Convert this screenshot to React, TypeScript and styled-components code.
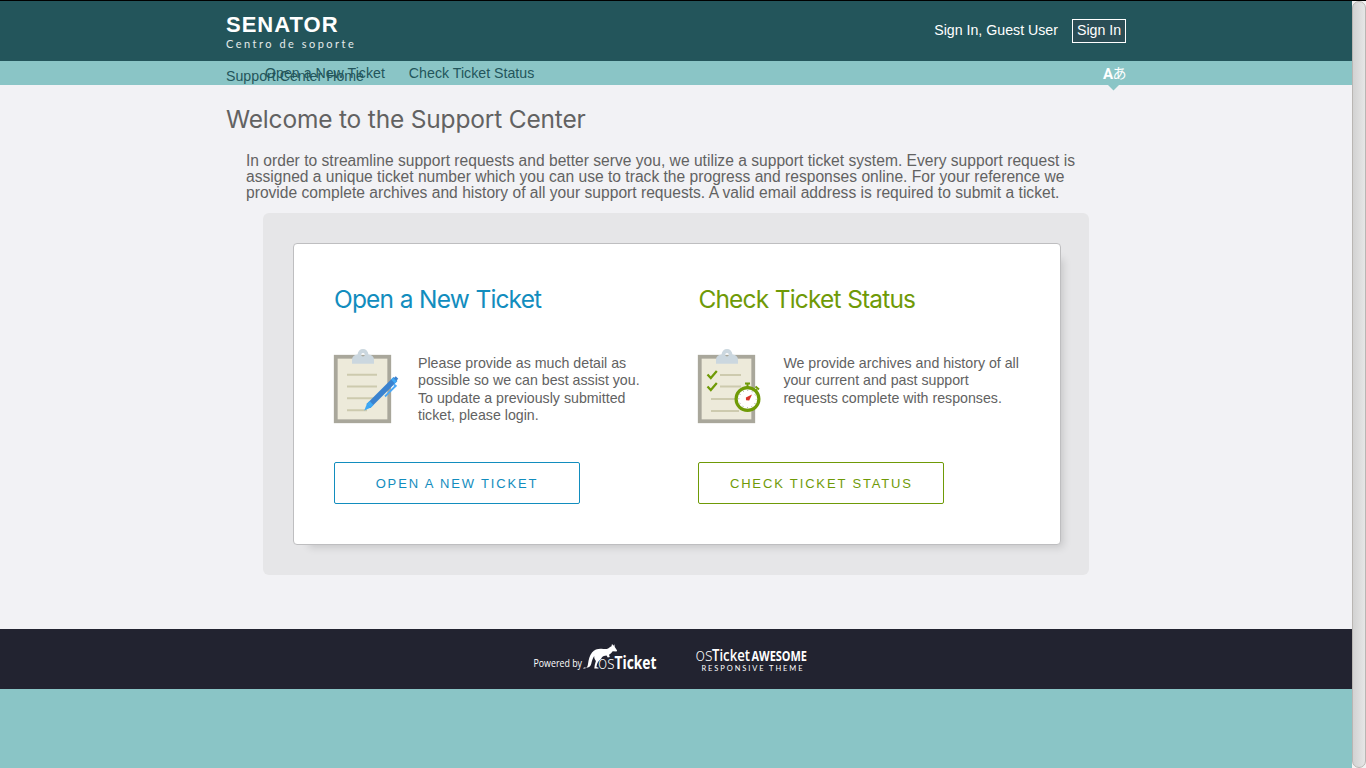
import React from "react";
import styled, { createGlobalStyle } from "styled-components";

const BLUE = "#128dbe";
const GREEN = "#6f9a07";

const GlobalStyle = createGlobalStyle`
  * { box-sizing: border-box; }
  body {
    margin: 0;
    overflow: hidden;
    background: #8ac5c6;
    font-family: "Liberation Sans", Arial, sans-serif;
    font-size: 14.2px;
    color: #626262;
  }
  a { color: inherit; text-decoration: none; }
  h1, h2, p { margin: 0; font-weight: 400; }
  svg { overflow: visible; }
`;

const Window = styled.div`
  display: flex;
  height: 768px;
  border-top: 1px solid #000;
`;

const Page = styled.div`
  flex: 1;
  display: flex;
  flex-direction: column;
`;

const Container = styled.div`
  width: 900px;
  margin: 0 auto;
`;

const Header = styled.header`
  height: 60px;
  background: #23555b;
  color: #fff;
`;

const HeaderInner = styled(Container)`
  display: flex;
  justify-content: space-between;
`;

const Brand = styled.a`
  display: block;
  padding-top: 11px;
`;

const BrandName = styled.div`
  font-size: 22px;
  line-height: 25px;
  font-weight: 700;
  letter-spacing: 1px;
`;

const BrandTag = styled.div`
  font-family: Lato, sans-serif;
  font-size: 11px;
  line-height: 14px;
  letter-spacing: 2.5px;
  color: #e3ebeb;
`;

const Account = styled.div`
  display: flex;
  align-items: center;
  height: 24px;
  margin-top: 18px;
  gap: 14px;
`;

const SignIn = styled.a`
  width: 54px;
  height: 24px;
  padding: 0 4px;
  border: 1px solid #fff;
  background: #2b4d55;
  line-height: 21px;
  white-space: nowrap;
`;

const Greeting = styled.span`
  line-height: 22px;
  padding-bottom: 2px;
`;

const Nav = styled.nav`
  height: 24px;
  background: #8ac5c6;
  color: #23555b;
`;

const NavInner = styled(Container)`
  position: relative;
  display: flex;
  gap: 24px;
  padding-left: 39px;
  line-height: 24px;
`;

const NavHome = styled.a`
  position: absolute;
  left: 0;
  top: 3px;
`;

const Language = styled.a`
  position: relative;
  display: flex;
  margin-left: auto;
  color: #fff;
`;

const Content = styled.main`
  height: 544px;
  background: #f2f2f5;
`;

const Title = styled.h1`
  padding-top: 17px;
  font-family: Inter, sans-serif;
  font-size: 24.5px;
  line-height: 34px;
  letter-spacing: -0.18px;
`;

const Intro = styled.p`
  padding: 17px 20px 0;
  font-size: 15.6px;
  line-height: 16px;
  letter-spacing: 0.01px;
`;

const Panel = styled.section`
  width: 826px;
  height: 362px;
  margin: 12px 0 0 37px;
  padding: 30px 28px 30px 30px;
  border-radius: 6px;
  background: #e6e6e8;
`;

const Card = styled.div`
  display: flex;
  height: 302px;
  padding: 38px 0 0 40px;
  border: 1px solid #bebec0;
  border-radius: 4px;
  background: #fff;
  box-shadow: 9px 9px 8px -7px rgba(0, 0, 0, 0.15);
`;

const Option = styled.article<{ $tone: string }>`
  flex: none;
  width: 364.4px;
  color: ${(p) => p.$tone};
`;

const OptionTitle = styled.h2`
  font-family: Inter, sans-serif;
  font-size: 24.5px;
  line-height: 34px;
  letter-spacing: -0.85px;
  word-spacing: 0.5px;
`;

const OptionBody = styled.div`
  display: flex;
  height: 80px;
  margin-top: 33px;
  gap: 14px;
  color: #626262;
  svg { flex: none; }
`;

const Description = styled.p`
  width: 240px;
  padding-top: 6px;
  line-height: 17.4px;
`;

const Button = styled.a`
  display: block;
  width: 246px;
  height: 42px;
  margin-top: 33px;
  border: 1px solid currentColor;
  border-radius: 2px;
  font-size: 13px;
  line-height: 41px;
  letter-spacing: 1.85px;
  text-align: center;
  text-transform: uppercase;
`;

const Footer = styled.footer`
  display: flex;
  height: 60px;
  padding: 12px 0 0 530px;
  gap: 32px;
  background: #222330;
`;

const Scrollbar = styled.div`
  width: 14px;
  background: #f3f3f3;
`;

const Thumb = styled.div`
  height: 767px;
  border: 1px solid #b9b6b3;
  border-radius: 7px;
  background: linear-gradient(90deg, #d2d2d2, #e6e6e6);
`;

const Clipboard = () => (
  <>
    <rect x="1.75" y="7.75" width="53.5" height="64.5" fill="#edeada" stroke="#a9a79b" strokeWidth="3.8" />
    <path
      fillRule="evenodd"
      fill="#cbd7df"
      d="M18 14.8V11Q18 6 23.5 5.5C24 2 26 0 29 0s5 2 5.5 5.500Q40 6 40 11v3.800ZM29 4a1.800 1.800 0 1 0 0 3.600 1.800 1.800 0 1 0 0-3.600Z"
    />
  </>
);

const OpenIcon = () => (
  <svg width="70" height="76" viewBox="0 0 70 76">
    <Clipboard />
    <path d="M13 25.700h30M13 37.500h30M13 49.300h30M13 61.200h20" stroke="#cdcaae" strokeWidth="2" />
    <path d="M30.300 61.500 33 54.500 37 58.500Z" fill="#3fa9f5" />
    <path d="M34.500 57 61.500 30" stroke="#3b82cf" strokeWidth="5.400" />
    <path d="M34.500 57l3-3M59 32.500l2-2" stroke="#3fa9f5" strokeWidth="5.400" />
    <path d="M61 30.500 63 28.500" stroke="#3b82cf" strokeWidth="3.500" />
    <path d="M51 47.500 62 36.500M60 35.500l2.500 2" stroke="#4ba8f6" strokeWidth="1.800" />
  </svg>
);

const StatusIcon = () => (
  <svg width="71" height="76" viewBox="0 0 71 76">
    <Clipboard />
    <path d="M22 26h21M22 37.500h21M13 50h25M13 62h28" stroke="#cdcaae" strokeWidth="2" />
    <path d="m9.500 25.500 3.300 3.500 6-7M9.500 37.500l3.300 3.500 6-7" fill="none" stroke={GREEN} strokeWidth="2.200" />
    <path d="M47 34.500h5M49.500 35v4M57.500 37.500l3.500 3M59 40.500l-2 2" stroke={GREEN} strokeWidth="2" />
    <circle cx="49.500" cy="50" r="11.400" fill="#fff" stroke={GREEN} strokeWidth="3.200" />
    <circle cx="49.500" cy="50" r="8.700" fill="none" stroke="#777" strokeDasharray="0.8 3.755" strokeDashoffset="0.4" />
    <path d="M54 45.500 51.200 51.500 48 51.200 47.900 48.500Z" fill="#d8342b" />
  </svg>
);

const PoweredBy = () => (
  <svg width="130" height="36" viewBox="0 0 130 36" fill="#fff">
    <text x="3.500" y="25.500" fontFamily="Open Sans, sans-serif" fontSize="10" textLength="48.500" lengthAdjust="spacingAndGlyphs">Powered by</text>
    <path d="M53 27.600c3.500 .2 4.500-1.600 5-4.600C58.700 18.500 59.500 14.500 62 11.500 64.500 8.500 68 7.600 71.500 7.800c3 .2 5 .6 7-.6 1.200-.8 2-1.600 3-2L82 2.700l1.300 2L84.300 3.300l.5 2.700 2.300 3.500-.6 1-3.800-.2c-1 1.600-2.200 2.700-3.700 3.500l.8 2.300-2 .4-1.300-2c-2 .2-3.500 .7-4.500 1.800-1 2.200-3 3.200-4 4.700-1 1.800-1.200 3.500-1.500 5l2 .7v.8h-4.200c.2-2.500 .6-5 1.600-7.500-1.200-1.500-1.800-3-1.700-5-1.700 2.700-2.400 5.200-3 8-.7 2.700-2.700 4.200-7.200 3.600Z" />
    <text x="68" y="28.300" fontFamily="Open Sans, sans-serif" fontSize="19" fontWeight="300" textLength="16.500" lengthAdjust="spacingAndGlyphs">os</text>
    <text x="84.500" y="28.300" fontFamily="Open Sans, sans-serif" fontSize="18.500" fontWeight="700" textLength="42" lengthAdjust="spacingAndGlyphs">Ticket</text>
  </svg>
);

const ThemeCredit = () => (
  <svg width="120" height="36" viewBox="0 0 120 36" fill="#fff" fontFamily="Open Sans, sans-serif">
    <text x="3.500" y="19.500" fontSize="17.500" fontWeight="300" textLength="17" lengthAdjust="spacingAndGlyphs">os</text>
    <text x="20" y="19.500" fontSize="16.500" fontWeight="600" textLength="38" lengthAdjust="spacingAndGlyphs">Ticket</text>
    <text x="59.500" y="19.500" fontSize="13.700" fontWeight="700" textLength="55.500" lengthAdjust="spacingAndGlyphs">AWESOME</text>
    <text x="9.500" y="29.700" fontFamily="Lato, sans-serif" fontSize="7.500" textLength="101">RESPONSIVE THEME</text>
  </svg>
);

const LanguageIcon = () => (
  <svg width="24" height="24" viewBox="0 0 24 24" fill="#fff">
    <text x="1" y="18" fontFamily="Roboto, sans-serif" fontSize="15" fontWeight="700">A</text>
    <text x="10.500" y="17.300" fontFamily="Noto Sans CJK JP, sans-serif" fontSize="14" fontWeight="400">あ</text>
    <path d="M6 24h11l-5.500 5.500Z" fill="#8ac5c6" />
  </svg>
);

export default function App() {
  return (
    <>
      <GlobalStyle />
      <Window>
        <Page>
          <Header>
            <HeaderInner>
              <Brand href="#">
                <BrandName>SENATOR</BrandName>
                <BrandTag>Centro de soporte</BrandTag>
              </Brand>
              <Account>
                <Greeting>Sign In, Guest User</Greeting>
                <SignIn href="#">Sign In</SignIn>
              </Account>
            </HeaderInner>
          </Header>
          <Nav>
            <NavInner>
              <NavHome href="#">Support Center Home</NavHome>
              <a href="#">Open a New Ticket</a>
              <a href="#">Check Ticket Status</a>
              <Language href="#"><LanguageIcon /></Language>
            </NavInner>
          </Nav>
          <Content>
            <Container>
              <Title>Welcome to the Support Center</Title>
              <Intro>
                In order to streamline support requests and better serve you, we utilize a support ticket system. Every
                support request is assigned a unique ticket number which you can use to track the progress and responses
                online. For your reference we provide complete archives and history of all your support requests. A valid
                email address is required to submit a ticket.
              </Intro>
              <Panel>
                <Card>
                  <Option $tone={BLUE}>
                    <OptionTitle>Open a New Ticket</OptionTitle>
                    <OptionBody>
                      <OpenIcon />
                      <Description>
                        Please provide as much detail as possible so we can best assist you. To update a previously
                        submitted ticket, please login.
                      </Description>
                    </OptionBody>
                    <Button href="#">Open a New Ticket</Button>
                  </Option>
                  <Option $tone={GREEN}>
                    <OptionTitle>Check Ticket Status</OptionTitle>
                    <OptionBody>
                      <StatusIcon />
                      <Description>
                        We provide archives and history of all your current and past support requests complete with
                        responses.
                      </Description>
                    </OptionBody>
                    <Button href="#">Check Ticket Status</Button>
                  </Option>
                </Card>
              </Panel>
            </Container>
          </Content>
          <Footer>
            <PoweredBy />
            <ThemeCredit />
          </Footer>
        </Page>
        <Scrollbar>
          <Thumb />
        </Scrollbar>
      </Window>
    </>
  );
}
